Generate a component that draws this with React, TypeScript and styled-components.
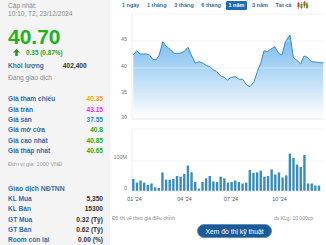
import React from "react";
import styled, { createGlobalStyle } from "styled-components";

const Global = createGlobalStyle`
  html, body { margin: 0; padding: 0; background: #fff; }
  body { font-family: "Liberation Sans", Arial, sans-serif; }
`;

const Page = styled.div`
  display: flex;
  width: 326px;
  height: 245px;
  overflow: hidden;
`;

const Left = styled.div`
  width: 110px;
  flex: none;
  box-sizing: border-box;
  background: #f4f4f4;
  padding: 2px 7px 0 8px;
  display: flex;
  flex-direction: column;
`;

const Muted = styled.div<{ $mt?: number }>`
  font-size: 6.6px;
  line-height: 8px;
  color: #8a8a8a;
  margin-top: ${(p) => p.$mt ?? 0}px;
  white-space: nowrap;
`;

const BigPrice = styled.div`
  margin-top: 8px;
  font-size: 21px;
  line-height: 22px;
  font-weight: 700;
  color: #1fb41f;
`;

const Change = styled.div`
  display: flex;
  align-items: center;
  gap: 6px;
  padding-left: 5px;
  height: 10px;
  font-size: 6.4px;
  font-weight: 700;
  color: #22a822;
`;

const Row = styled.div<{ $h?: number }>`
  display: flex;
  justify-content: space-between;
  align-items: center;
  height: ${(p) => p.$h ?? 10.3}px;
  white-space: nowrap;
`;

const Label = styled.span`
  font-size: 6.6px;
  font-weight: 700;
  color: #2f6ea8;
`;

const Value = styled.span<{ $c?: string }>`
  font-size: 6.6px;
  font-weight: 700;
  color: ${(p) => p.$c ?? "#333"};
`;

const VolRow = styled.div`
  display: flex;
  align-items: center;
  height: 10px;
  margin-top: 3px;
  gap: 19px;
`;

const Rows = styled.div<{ $mt: number }>`
  display: flex;
  flex-direction: column;
  margin-top: ${(p) => p.$mt}px;
`;

const Unit = styled.div`
  margin-top: 4px;
  font-size: 5.6px;
  line-height: 8px;
  color: #9a9a9a;
`;

const SectionTitle = styled.div`
  margin-top: 16px;
  font-size: 6.8px;
  line-height: 10px;
  font-weight: 700;
  color: #2f6ea8;
`;

const Right = styled.div`
  flex: 1;
  display: flex;
  flex-direction: column;
  background: #fff;
`;

const Tabs = styled.div`
  display: flex;
  align-items: center;
  gap: 1.6px;
  height: 10px;
  padding-left: 9px;
`;

const Tab = styled.span<{ $active?: boolean }>`
  font-size: 5.5px;
  font-weight: 700;
  line-height: 9px;
  padding: 0 3px;
  border-radius: 1.5px;
  color: ${(p) => (p.$active ? "#fff" : "#2f6ea8")};
  background: ${(p) => (p.$active ? "#1a6db3" : "transparent")};
  white-space: nowrap;
`;

const Chart = styled.svg`
  display: block;
  width: 216px;
  height: 198px;
`;

const NoteRow = styled.div`
  display: flex;
  justify-content: space-between;
  align-items: center;
  height: 8px;
  margin-top: 6px;
  padding: 0 13px 0 2px;
  font-size: 5px;
  color: #8a8a8a;
  white-space: nowrap;
`;

const ButtonRow = styled.div`
  display: flex;
  padding-left: 87px;
  margin-top: 2px;
`;

const TechButton = styled.button`
  width: 75px;
  height: 14px;
  padding: 0;
  border: 1px solid #5d8fc0;
  border-radius: 7px;
  background: #1c5a97;
  color: #fff;
  font-family: "Liberation Sans", Arial, sans-serif;
  font-size: 6.8px;
  white-space: nowrap;
`;

const leftRows1: [string, string, string][] = [
  ["Giá tham chiếu", "40.35", "#f5a11a"],
  ["Giá trần", "43.15", "#e52fe5"],
  ["Giá sàn", "37.55", "#2a8dc8"],
  ["Giá mở cửa", "40.8", "#22b022"],
  ["Giá cao nhất", "40.85", "#22b022"],
  ["Giá thấp nhất", "40.65", "#22b022"],
];

const leftRows2: [string, string][] = [
  ["KL Mua", "5,350"],
  ["KL Bán", "15300"],
  ["GT Mua", "0.32 (Tỷ)"],
  ["GT Bán", "0.62 (Tỷ)"],
  ["Room còn lại", "0.00 (%)"],
];

const tabs = ["1 ngày", "1 tháng", "3 tháng", "6 tháng", "1 năm", "3 năm", "Tất cả"];

// page coordinates of price line
const pricePts: [number, number][] = [
  [133.3, 55], [136.7, 50.7], [140, 54], [146.7, 54], [149.3, 54.7], [152.7, 59.3],
  [156, 60], [159.3, 55], [162.7, 41.7], [166, 46], [170, 49.3], [174, 53.3],
  [180, 53.3], [184, 51.7], [188, 47.3], [191.3, 55], [195.3, 63.3], [198.7, 61.7],
  [202, 62.7], [206.7, 65.7], [210, 66.7], [213.3, 70], [216.7, 71.7], [220.7, 76],
  [224, 77.3], [227.3, 80], [231.3, 77.3], [235.3, 76.7], [239.3, 79.3], [242.7, 79.3],
  [246.7, 85], [250, 86.7], [254, 81.7], [257.3, 71.7], [260.7, 63.3], [264, 50.7],
  [267.3, 51.7], [270.7, 49.3], [274.7, 46.7], [278.7, 53.3], [282, 55], [285.3, 41.7],
  [290, 35], [293.3, 57.3], [297.3, 60.7], [300.7, 64], [304, 56], [307.3, 57.3],
  [311.3, 61.7], [316, 62], [320, 62.7], [323.3, 62.7],
];

const volumes = [
  40, 28, 35, 28, 20, 25, 12, 10, 62, 38, 38, 40, 50, 48, 57, 85, 62, 30, 8, 30,
  42, 50, 32, 30, 48, 42, 28, 30, 35, 30, 25, 28, 70, 60, 62, 68, 48, 50, 72, 55,
  62, 45, 52, 125, 110, 88, 80, 120, 25, 25, 18, 18,
];

const OX = 110;
const OY = 10;

function PriceChart() {
  const pts = pricePts.map(([x, y]) => [x - OX, y - OY] as [number, number]);
  const line = pts.map((p, i) => `${i ? "L" : "M"}${p[0].toFixed(1)},${p[1].toFixed(1)}`).join(" ");
  const baseY = 119 - OY;
  const area = `${line} L${pts[pts.length - 1][0]},${baseY} L${pts[0][0]},${baseY} Z`;
  const axisX = 132 - OX;
  const right = 324 - OX;
  const grid = [
    { y: 41, t: "45" },
    { y: 68, t: "40" },
    { y: 94, t: "35" },
  ];
  const labelStyle = { fontSize: 5.4, fill: "#777", fontFamily: "Liberation Sans, Arial, sans-serif" } as const;
  const baseVol = 191 - OY;
  const step = (319 - 133.3) / (volumes.length - 1);
  return (
    <Chart viewBox="0 0 216 198">
      <defs>
        <linearGradient id="pf" x1="0" y1="0" x2="0" y2="1">
          <stop offset="0" stopColor="#74b9ee" />
          <stop offset="1" stopColor="#ffffff" />
        </linearGradient>
      </defs>
      {/* price frame */}
      <line x1={axisX} y1={14 - OY} x2={right} y2={14 - OY} stroke="#ececec" strokeWidth={0.6} />
      <line x1={axisX} y1={14 - OY} x2={axisX} y2={baseY} stroke="#e2e2e2" strokeWidth={0.6} />
      <path d={area} fill="url(#pf)" />
      {grid.map((g) => (
        <g key={g.t}>
          <line x1={axisX} y1={g.y - OY} x2={right} y2={g.y - OY} stroke="#ececec" strokeWidth={0.6} />
          <text x={127 - OX} y={g.y - OY - 0.5} textAnchor="end" style={labelStyle}>{g.t}</text>
        </g>
      ))}
      <line x1={axisX} y1={baseY} x2={right} y2={baseY} stroke="#dedede" strokeWidth={0.6} />
      <text x={127 - OX} y={119 - OY} textAnchor="end" style={labelStyle}>30</text>
      <path d={line} fill="none" stroke="#3a8cc4" strokeWidth={1} strokeLinejoin="round" />

      {/* volume */}
      <line x1={axisX} y1={129 - OY} x2={right} y2={129 - OY} stroke="#ececec" strokeWidth={0.6} />
      <line x1={axisX} y1={129 - OY} x2={axisX} y2={baseVol} stroke="#e2e2e2" strokeWidth={0.6} />
      <line x1={axisX} y1={161 - OY} x2={right} y2={161 - OY} stroke="#ececec" strokeWidth={0.6} />
      <text x={127 - OX} y={159 - OY} textAnchor="end" style={labelStyle}>100M</text>
      <text x={127 - OX} y={190 - OY} textAnchor="end" style={labelStyle}>0</text>
      {volumes.map((v, i) => {
        const cx = 133.3 + i * step - OX;
        const h = v * 0.3;
        return <rect key={i} x={cx - 1.2} y={baseVol - h} width={2.4} height={h} fill="#3a8dbb" />;
      })}
      <line x1={axisX} y1={baseVol} x2={right} y2={baseVol} stroke="#dedede" strokeWidth={0.6} />
      {[
        { x: 134.5, t: "01 '24" },
        { x: 184.5, t: "04 '24" },
        { x: 231, t: "07 '24" },
        { x: 279.5, t: "10 '24" },
      ].map((l) => (
        <text key={l.t} x={l.x - OX} y={201 - OY} textAnchor="middle" style={{ ...labelStyle, fill: "#555" }}>
          {l.t}
        </text>
      ))}
    </Chart>
  );
}

function CandleIcon() {
  return (
    <svg width="11" height="9" viewBox="0 0 11 9" style={{ marginLeft: 1 }}>
      <line x1="1.5" y1="0.5" x2="1.5" y2="8" stroke="#d33" strokeWidth="0.6" />
      <rect x="0.5" y="2" width="2" height="4" fill="#e33" />
      <line x1="4.5" y1="1" x2="4.5" y2="8.5" stroke="#2a2" strokeWidth="0.6" />
      <rect x="3.5" y="3" width="2" height="4" fill="#2b2" />
      <line x1="7.5" y1="0" x2="7.5" y2="7" stroke="#d33" strokeWidth="0.6" />
      <rect x="6.5" y="1" width="2" height="4" fill="#e33" />
      <line x1="10" y1="1" x2="10" y2="8" stroke="#2a2" strokeWidth="0.6" />
      <rect x="9" y="2.5" width="2" height="4.5" fill="#2b2" />
    </svg>
  );
}

function UpArrow() {
  return (
    <svg width="7" height="7" viewBox="0 0 7 7">
      <path d="M3.5 0 L7 3.6 L4.7 3.6 L4.7 7 L2.3 7 L2.3 3.6 L0 3.6 Z" fill="#1e9a1e" />
    </svg>
  );
}

export default function App() {
  return (
    <>
      <Global />
      <Page>
        <Left>
          <Muted>Cập nhật:</Muted>
          <Muted>10:10, T2, 23/12/2024</Muted>
          <BigPrice>40.70</BigPrice>
          <Change>
            <UpArrow />
            <span>0.35 (0.87%)</span>
          </Change>
          <VolRow>
            <Label>Khối lượng</Label>
            <Value>402,400</Value>
          </VolRow>
          <Muted $mt={3}>Đang giao dịch</Muted>
          <Rows $mt={12}>
            {leftRows1.map(([l, v, c]) => (
              <Row key={l}>
                <Label>{l}</Label>
                <Value $c={c}>{v}</Value>
              </Row>
            ))}
          </Rows>
          <Unit>Đơn vị giá: 1000 VNĐ</Unit>
          <SectionTitle>Giao dịch NĐTNN</SectionTitle>
          <Rows $mt={0}>
            {leftRows2.map(([l, v]) => (
              <Row key={l}>
                <Label>{l}</Label>
                <Value>{v}</Value>
              </Row>
            ))}
          </Rows>
        </Left>
        <Right>
          <Tabs>
            {tabs.map((t) => (
              <Tab key={t} $active={t === "1 năm"}>
                {t}
              </Tab>
            ))}
            <CandleIcon />
          </Tabs>
          <PriceChart />
          <NoteRow>
            <span>Đồ thị vẽ theo giá điều chỉnh</span>
            <span>dv KLg: 10,000cp</span>
          </NoteRow>
          <ButtonRow>
            <TechButton>Xem đồ thị kỹ thuật</TechButton>
          </ButtonRow>
        </Right>
      </Page>
    </>
  );
}
